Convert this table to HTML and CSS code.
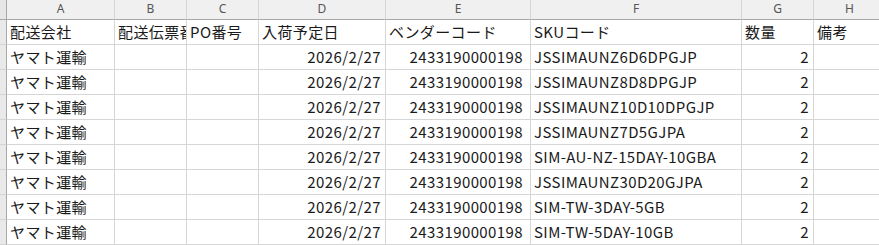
FILE: index.html
```html
<!DOCTYPE html>
<html lang="ja">
<head>
<meta charset="utf-8">
<link rel="stylesheet" href="styles.css">
</head>
<body>
<div class="sheet">
  <div class="corner"></div>
  <div class="colhead">A</div><div class="colhead">B</div><div class="colhead">C</div><div class="colhead">D</div><div class="colhead">E</div><div class="colhead">F</div><div class="colhead">G</div><div class="colhead last">H</div>

  <div class="rowhead"></div>
  <div class="cell">配送会社</div><div class="cell">配送伝票番号</div><div class="cell">PO番号</div><div class="cell">入荷予定日</div><div class="cell">ベンダーコード</div><div class="cell">SKUコード</div><div class="cell">数量</div><div class="cell">備考</div>

  <div class="rowhead"></div>
  <div class="cell">ヤマト運輸</div><div class="cell"></div><div class="cell"></div><div class="cell num">2026/2/27</div><div class="cell num code">2433190000198</div><div class="cell">JSSIMAUNZ6D6DPGJP</div><div class="cell num">2</div><div class="cell"></div>

  <div class="rowhead"></div>
  <div class="cell">ヤマト運輸</div><div class="cell"></div><div class="cell"></div><div class="cell num">2026/2/27</div><div class="cell num code">2433190000198</div><div class="cell">JSSIMAUNZ8D8DPGJP</div><div class="cell num">2</div><div class="cell"></div>

  <div class="rowhead"></div>
  <div class="cell">ヤマト運輸</div><div class="cell"></div><div class="cell"></div><div class="cell num">2026/2/27</div><div class="cell num code">2433190000198</div><div class="cell">JSSIMAUNZ10D10DPGJP</div><div class="cell num">2</div><div class="cell"></div>

  <div class="rowhead"></div>
  <div class="cell">ヤマト運輸</div><div class="cell"></div><div class="cell"></div><div class="cell num">2026/2/27</div><div class="cell num code">2433190000198</div><div class="cell">JSSIMAUNZ7D5GJPA</div><div class="cell num">2</div><div class="cell"></div>

  <div class="rowhead"></div>
  <div class="cell">ヤマト運輸</div><div class="cell"></div><div class="cell"></div><div class="cell num">2026/2/27</div><div class="cell num code">2433190000198</div><div class="cell">SIM-AU-NZ-15DAY-10GBA</div><div class="cell num">2</div><div class="cell"></div>

  <div class="rowhead"></div>
  <div class="cell">ヤマト運輸</div><div class="cell"></div><div class="cell"></div><div class="cell num">2026/2/27</div><div class="cell num code">2433190000198</div><div class="cell">JSSIMAUNZ30D20GJPA</div><div class="cell num">2</div><div class="cell"></div>

  <div class="rowhead"></div>
  <div class="cell">ヤマト運輸</div><div class="cell"></div><div class="cell"></div><div class="cell num">2026/2/27</div><div class="cell num code">2433190000198</div><div class="cell">SIM-TW-3DAY-5GB</div><div class="cell num">2</div><div class="cell"></div>

  <div class="rowhead"></div>
  <div class="cell">ヤマト運輸</div><div class="cell"></div><div class="cell"></div><div class="cell num">2026/2/27</div><div class="cell num code">2433190000198</div><div class="cell">SIM-TW-5DAY-10GB</div><div class="cell num">2</div><div class="cell"></div>
</div>
</body>
</html>
```

FILE: styles.css
```css
html, body {
  margin: 0;
  padding: 0;
  background: #ffffff;
  overflow: hidden;
}

.sheet {
  display: grid;
  grid-template-columns: 7px 108px 72px 72px 127px 145px 211px 72px 72px;
  grid-template-rows: 20px repeat(9, 25px);
  width: 886px;
  font-family: "Noto Sans CJK JP", "Noto Sans", sans-serif;
}

.corner {
  background: #e6e6e6;
  border-right: 1px solid #a8a8a8;
  border-bottom: 1px solid #a8a8a8;
  box-sizing: border-box;
}

.colhead {
  box-sizing: border-box;
  background: #f0f0f0;
  border-right: 1px solid #d6d6d6;
  border-bottom: 1px solid #a8a8a8;
  color: #555555;
  font-family: "Noto Sans", "DejaVu Sans", sans-serif;
  font-size: 12px;
  line-height: 18px;
  text-align: center;
}

.rowhead {
  box-sizing: border-box;
  background: #e9e9e9;
  border-right: 1px solid #a8a8a8;
  border-bottom: 1px solid #d4d4d4;
}

.cell {
  box-sizing: border-box;
  border-right: 1px solid #d6d6d6;
  border-bottom: 1px solid #d6d6d6;
  padding: 0 3px;
  font-size: 15px;
  line-height: 23px;
  letter-spacing: 0.4px;
  color: #1a1a1a;
  white-space: nowrap;
  overflow: hidden;
}

.num {
  text-align: right;
  padding-right: 4px;
}

.code {
  padding-right: 7px;
}
```
